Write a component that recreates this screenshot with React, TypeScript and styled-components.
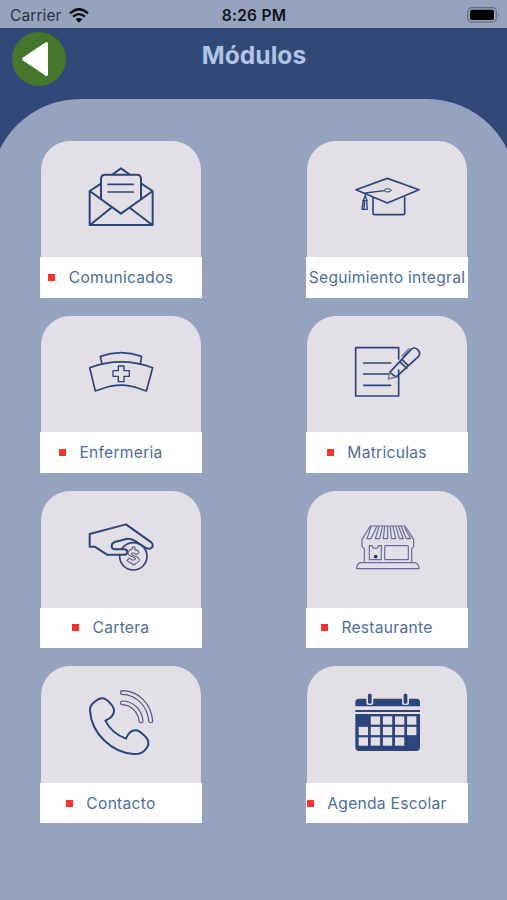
import React from "react";
import styled, { createGlobalStyle } from "styled-components";

const NAVY = "#2c457c";
const MIST = "#96a3bf";
const TILE = "#e3dfe6";

const GlobalStyle = createGlobalStyle`
  * { box-sizing: border-box; }
  body { margin: 0; background: ${MIST}; font-family: Inter, "Liberation Sans", sans-serif; }
`;

const Screen = styled.div`
  display: flex;
  flex-direction: column;
  width: 507px;
  height: 900px;
  overflow: hidden;
  background: #314878;
`;

const StatusBar = styled.div`
  display: grid;
  grid-template-columns: 1fr auto 1fr;
  align-items: center;
  height: 28px;
  flex: none;
  padding: 2px 7px 0 10px;
  background: ${MIST};
  color: #10131a;
  font-size: 15.5px;
`;

const Carrier = styled.div`
  display: flex;
  align-items: center;
  gap: 7px;
  color: #2c323d;
  letter-spacing: 0.1px;
`;

const Clock = styled.div`
  margin-left: -2px;
  font-size: 15.5px;
  font-weight: 600;
  letter-spacing: 0.25px;
`;

const BatterySlot = styled.div`
  display: flex;
  justify-content: flex-end;
`;

const Header = styled.header`
  display: grid;
  grid-template-columns: 54px 1fr 54px;
  height: 71px;
  flex: none;
  padding: 4px 11px 0 12px;
`;

const BackButton = styled.button`
  width: 54px;
  height: 54px;
  padding: 0;
  border: 0;
  border-radius: 50%;
  background: #44762c;
  svg { display: block; }
`;

const Title = styled.h1`
  margin: 7px 0 0;
  text-align: center;
  font-size: 24.6px;
  line-height: 32px;
  font-weight: 700;
  color: #b0c4e6;
`;

const Panel = styled.main`
  flex: 1;
  margin: 0 -9px;
  padding: 41.5px 48px 0 49px;
  border-radius: 89px 89px 0 0;
  background: ${MIST};
`;

const Modules = styled.div`
  display: grid;
  grid-template-columns: 162px 162px;
  justify-content: space-between;
  row-gap: 18px;
`;

const Module = styled.section`
  display: flex;
  flex-direction: column;
  align-items: center;
`;

const Tile = styled.div`
  width: 160px;
  height: 116.7px;
  border-radius: 29px 29px 0 0;
  background: ${TILE};
  svg { display: block; }
`;

const Label = styled.div`
  display: flex;
  align-items: center;
  justify-content: center;
  width: 162px;
  height: 40.5px;
  background: #fff;
`;

const LabelText = styled.span<{ $marked: boolean }>`
  position: relative;
  white-space: nowrap;
  font-size: 15.6px;
  letter-spacing: 0.27px;
  color: #4f6d9f;
  &::before {
    content: "";
    display: ${(p) => (p.$marked ? "block" : "none")};
    position: absolute;
    left: -20.5px;
    top: 6px;
    width: 7px;
    height: 7px;
    background: #f5352d;
  }
`;

function Drawing({ origin, children }: { origin: string; children: React.ReactNode }) {
  return (
    <svg
      width="160"
      height="116.7"
      viewBox={`${origin} 480 350`}
      fill="none"
      stroke={NAVY}
      strokeWidth="5"
      strokeLinejoin="round"
      strokeLinecap="round"
    >
      {children}
    </svg>
  );
}

const Mail = () => (
  <Drawing origin="33 33">
    <path d="M249 132 273 115l24 17M213 161l-34 22v102h189V183l-34-22M179 183l94 68 95-68M181 284l62-50M366 284l-66-50" strokeWidth="6" />
    <path d="M213 205v-58q0-13 13-13h94q13 0 13 13v58" strokeWidth="6" />
    <path d="M234 163h76M234 186h76" />
  </Drawing>
);

const Graduation = () => (
  <Drawing origin="30 33">
    <path d="M177 179 271 145l95 34-95 40ZM228 202v47q0 5 5 5h85q5 0 5-5v-47" />
    <path d="M205 197v-8l57-7M205 197l-7 15M205 197l5 15" strokeWidth="4" />
    <ellipse cx="272" cy="181" rx="10" ry="5" strokeWidth="3" />
    <path d="M199 211h10l2 27h-16ZM203 215l-2 22" strokeWidth="4" />
  </Drawing>
);

const NurseCap = () => (
  <Drawing origin="33 17">
    <path d="M216 160l-5-22q62-22 124 0l-4 23M179 172q94-35 189 0l-19 70-18-6q-58-23-117 0l-18 6Z" />
    <path d="M265 167h17v14h16v17h-16v16h-17v-16h-16v-17h16Z" strokeWidth="4" />
  </Drawing>
);

const Form = () => (
  <Drawing origin="30 17">
    <path d="M305 146v-34H176v145h129v-78" strokeWidth="5" />
    <path d="M200 158h81M200 191h75M200 225h81" />
    <path d="M278 186 342 118q9-10 20 0t2 21L297 200ZM308 154l21 20M315 148l19 18" strokeWidth="5" />
    <path d="M278 186l-4 20 23-6" stroke="#75778b" strokeWidth="4" />
    <path d="M314 137l21-22 5 3M319 138l16-17" strokeWidth="3" />
  </Drawing>
);

const Payment = () => (
  <Drawing origin="33 17">
    <circle cx="310" cy="213" r="41" />
    <path
      d="M179 146 288 117 364 171q8 9 1 16-8 6-19 0L312 165q-10-6-20-5l-38 10q-9 4-9 12 0 9 10 10h29q8 2 8 8 0 8-8 8h-53l-37-24h-15Z"
      fill={TILE}
      strokeWidth="6"
    />
    <path
      d="M307 185h8v8q10 1 12 9l-7 6q-5-6-13-5-5 3 0 6l13 5q10 5 7 13-3 6-12 8v3h-8v-4q-11-2-16-9l7-7q6 7 15 6 6-3 1-7l-13-5q-9-5-6-13 3-6 12-8Z"
      stroke="#66668f"
      strokeWidth="3.5"
    />
  </Drawing>
);

const Store = () => (
  <Drawing origin="30 17">
    <g stroke="#666b9f" strokeWidth="3.5">
      <path d="M220 122h104l26 40v22l-6 6v42H202v-42l-7-6v-22ZM191 232h162q12 2 13 18H179q0-15 12-18Z" />
      <path d="m222 124-12 36h12l17-36M246 124l-11 36h13l8-36M263 124l-4 36h13v-36M280 124l3 36h13l-8-36M297 124l10 36h12l-14-36M313 124l15 36h13l-18-33" />
      <path d="M217 181h9q2 11 9 7 7 4 9-7h9v42h-36ZM266 181h65q3 0 3 3v36q0 3-3 3h-65q-3 0-3-3v-36q0-3 3-3Z" />
    </g>
    <rect x="231" y="209" width="10" height="10" rx="3" fill="#25295f" stroke="none" />
  </Drawing>
);

const Phone = () => (
  <Drawing origin="33 17">
    <path
      d="M216 114c-10 0-15 5-24 12-9 8-13 15-12 25 4 70 67 126 130 130 13 1 25-1 34-11 8-8 12-14 11-23 0-8-4-14-13-22-8-8-15-15-25-15-15 0-24 12-29 25-28-10-48-26-62-54 13-6 26-13 26-30 0-10-5-16-13-24-8-9-14-13-23-13Z"
      strokeWidth="6"
    />
    <path
      d="M276 91c49 0 88 39 92 91 0 7-11 7-12 0-3-43-36-79-80-80-6-1-6-10 0-11ZM276 122c33 0 60 25 63 60 0 7-11 7-12 0-3-27-23-48-51-49-6-1-6-10 0-11Z"
      stroke="#50558a"
      strokeWidth="3.5"
    />
  </Drawing>
);

const dayCells = [
  [1, 2, 3, 4],
  [0, 1, 2, 3, 4],
  [0, 1, 2, 3],
];

const Calendar = () => (
  <Drawing origin="30 17">
    <g stroke="none" fill={NAVY}>
      <path d="M175 138v-12q0-11 11-11h172q11 0 11 11v12ZM175 149h194v6H175ZM175 161h194v100q0 11-11 11H186q-11 0-11-11Z" />
      <rect x="208" y="96" width="21" height="38" rx="6" fill={TILE} />
      <rect x="315" y="96" width="21" height="38" rx="6" fill={TILE} />
      <rect x="213" y="100" width="11" height="30" rx="4" />
      <rect x="320" y="100" width="11" height="30" rx="4" />
      {dayCells.map((row, r) =>
        row.map((c) => (
          <rect key={`${r}-${c}`} x={185 + c * 36.3} y={168 + r * 31.5} width="28" height="25" fill={TILE} />
        ))
      )}
    </g>
  </Drawing>
);

const modules = [
  { name: "Comunicados", Icon: Mail, marked: true },
  { name: "Seguimiento integral", Icon: Graduation, marked: false },
  { name: "Enfermeria", Icon: NurseCap, marked: true },
  { name: "Matriculas", Icon: Form, marked: true },
  { name: "Cartera", Icon: Payment, marked: true },
  { name: "Restaurante", Icon: Store, marked: true },
  { name: "Contacto", Icon: Phone, marked: true },
  { name: "Agenda Escolar", Icon: Calendar, marked: true },
];

export default function App() {
  return (
    <>
      <GlobalStyle />
      <Screen>
        <StatusBar>
          <Carrier>
            Carrier
            <svg width="20" height="15" viewBox="0 0 60 45" fill="none" stroke="#080a0e" strokeWidth="7">
              <path d="M3 16Q30-8 57 16M12 26q18-15 36 0" />
              <path d="M20 34q10-8 20 0L30 44Z" fill="#080a0e" stroke="none" />
            </svg>
          </Carrier>
          <Clock>8:26 PM</Clock>
          <BatterySlot>
            <svg width="33" height="16" viewBox="0 0 33 16">
              <rect x="0.7" y="0.7" width="28.6" height="14.4" rx="4" fill="none" stroke="#646d80" strokeWidth="1.2" />
              <rect x="3" y="2.8" width="24" height="10.2" rx="2" fill="#000" />
              <path d="M31 5.5q2 2.5 0 5Z" fill="#646d80" />
            </svg>
          </BatterySlot>
        </StatusBar>
        <Header>
          <BackButton aria-label="Volver">
            <svg width="54" height="54" viewBox="0 0 54 54">
              <path d="M11.5 27 34.5 11.5v31Z" fill="#fff" stroke="#fff" strokeWidth="3" strokeLinejoin="round" />
            </svg>
          </BackButton>
          <Title>Módulos</Title>
        </Header>
        <Panel>
          <Modules>
            {modules.map(({ name, Icon, marked }) => (
              <Module key={name}>
                <Tile>
                  <Icon />
                </Tile>
                <Label>
                  <LabelText $marked={marked}>{name}</LabelText>
                </Label>
              </Module>
            ))}
          </Modules>
        </Panel>
      </Screen>
    </>
  );
}
